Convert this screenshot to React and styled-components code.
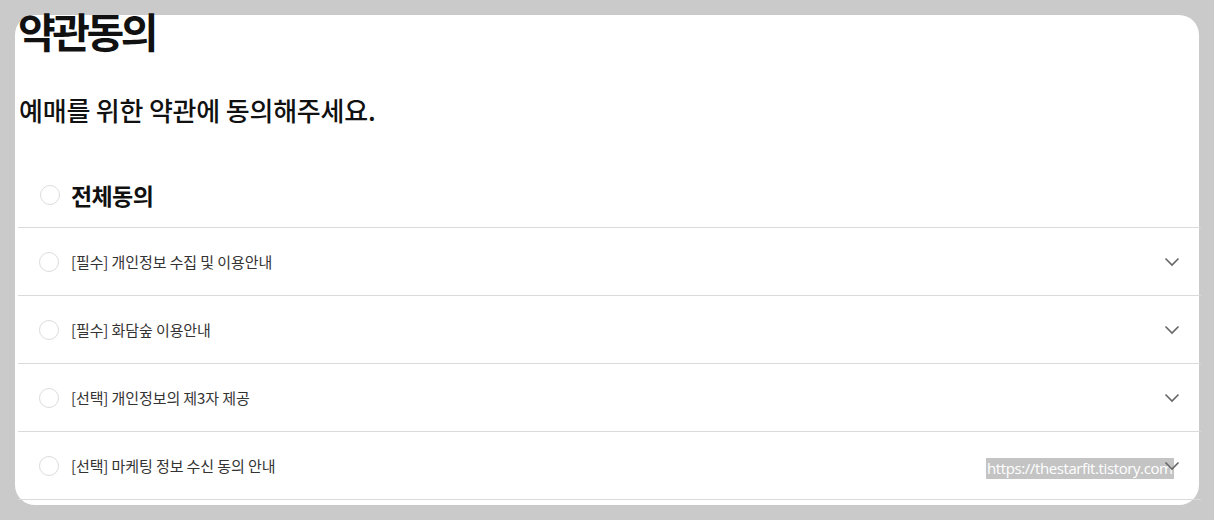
import React from 'react';
import styled, { createGlobalStyle } from 'styled-components';

const GlobalStyle = createGlobalStyle`
  html, body {
    margin: 0;
    padding: 0;
    background: #cacaca;
  }
  body {
    font-family: "Noto Sans CJK KR", "Noto Sans", sans-serif;
    color: #111;
  }
`;

const Page = styled.div`
  padding: 15px;
  height: 520px;
  box-sizing: border-box;
`;

const Card = styled.section`
  position: relative;
  display: flow-root;
  width: 1184px;
  height: 490px;
  background: #fff;
  border-radius: 20px;
`;

const Inner = styled.div`
  width: 1183px;
  margin-left: 3px;
`;

const Title = styled.h1`
  margin: -11px 0 0;
  font-size: 41px;
  line-height: 52px;
  font-weight: 700;
  letter-spacing: -3.5px;
  color: #111;
`;

const SubTitle = styled.h2`
  margin: 38px 0 0 1px;
  font-size: 26px;
  line-height: 32px;
  font-weight: 500;
  letter-spacing: -0.2px;
  color: #111;
`;

const AllRow = styled.label`
  display: flex;
  align-items: center;
  gap: 11px;
  height: 64px;
  margin-top: 38px;
  padding: 0 0 2px 22px;
  border-bottom: 1px solid #dadada;
  box-sizing: border-box;
`;

const AllText = styled.span`
  font-size: 23px;
  font-weight: 700;
  letter-spacing: -0.6px;
  color: #111;
`;

const Circle = styled.span`
  width: 20px;
  height: 20px;
  box-sizing: border-box;
  border: 1px solid #dcdcdc;
  border-radius: 50%;
  flex: none;
  background: #fff;
`;

const Row = styled.div`
  display: flex;
  align-items: center;
  height: 68px;
  box-sizing: border-box;
  padding: 0 21px;
  border-bottom: 1px solid #dadada;
  gap: 12px;
`;

const RowText = styled.span`
  flex: 1;
  font-size: 15px;
  letter-spacing: -0.1px;
  color: #333;
`;

const Chevron = styled.svg`
  position: relative;
  z-index: 2;
  width: 16px;
  height: 10px;
  flex: none;
`;

const Watermark = styled.span`
  position: absolute;
  z-index: 1;
  left: 971px;
  top: 443px;
  padding: 0 1px;
  height: 21px;
  line-height: 21px;
  background: #c4c4c4;
  color: #fff;
  font-family: "Open Sans", "DejaVu Sans", sans-serif;
  font-size: 15px;
  letter-spacing: -0.4px;
`;

const terms = [
  '[필수] 개인정보 수집 및 이용안내',
  '[필수] 화담숲 이용안내',
  '[선택] 개인정보의 제3자 제공',
  '[선택] 마케팅 정보 수신 동의 안내',
];

const ChevronIcon = () => (
  <Chevron viewBox="0 0 16 10">
    <path d="M1.5 1.5 L8 8 L14.5 1.5" fill="none" stroke="#666" strokeWidth="1.6" />
  </Chevron>
);

const App = () => (
  <>
    <GlobalStyle />
    <Page>
      <Card>
        <Inner>
          <Title>약관동의</Title>
          <SubTitle>예매를 위한 약관에 동의해주세요.</SubTitle>
          <AllRow>
            <Circle />
            <AllText>전체동의</AllText>
          </AllRow>
          {terms.map(t => (
            <Row key={t}>
              <Circle />
              <RowText>{t}</RowText>
              <ChevronIcon />
            </Row>
          ))}
        </Inner>
        <Watermark>https://thestarfit.tistory.com</Watermark>
      </Card>
    </Page>
  </>
);

export default App;
